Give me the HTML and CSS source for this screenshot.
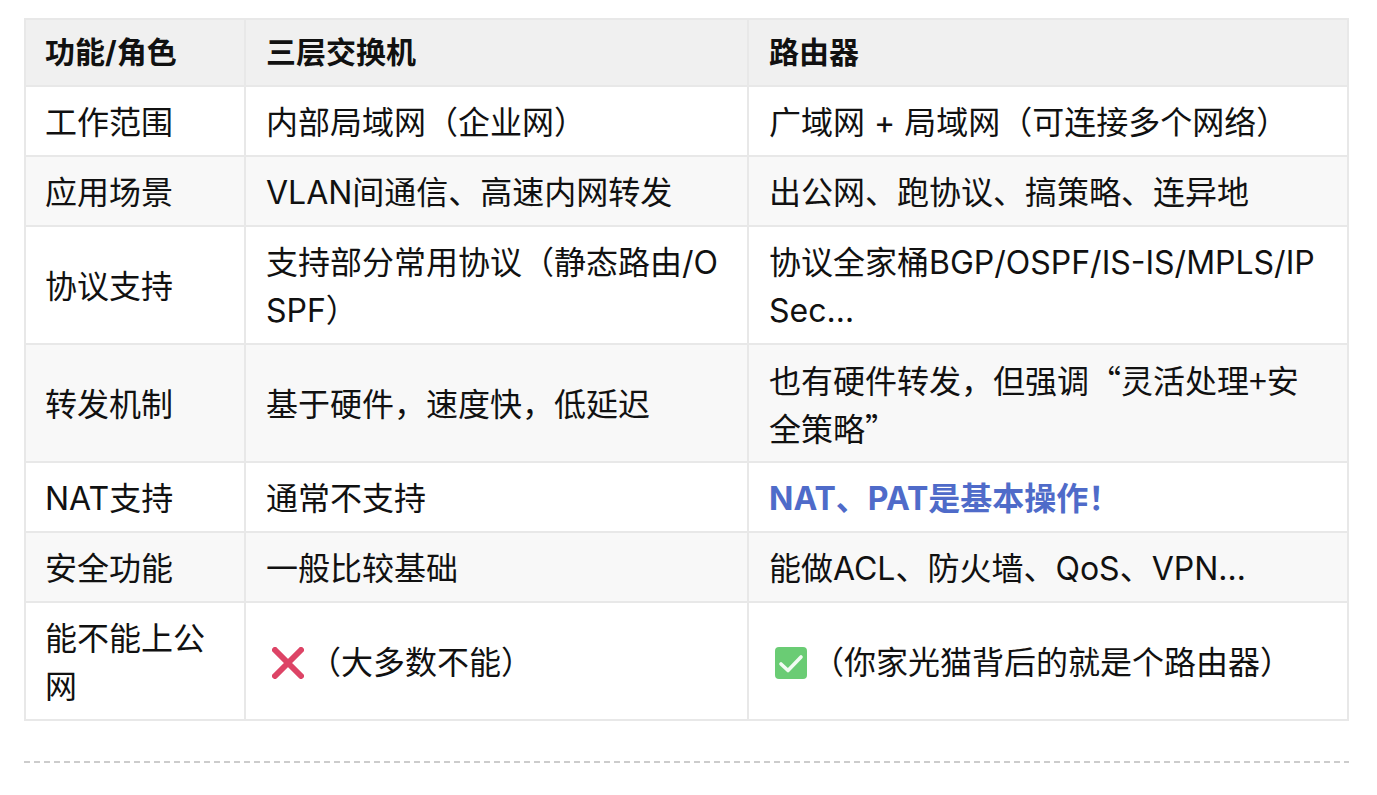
FILE: index.html
```html
<!DOCTYPE html>
<html lang="zh-CN">
<head>
<meta charset="utf-8">
<title>三层交换机与路由器</title>
<link rel="stylesheet" href="styles.css">
</head>
<body>
<table class="compare">
  <colgroup><col class="c1"><col class="c2"><col class="c3"></colgroup>
  <thead>
    <tr><th>功能/角色</th><th>三层交换机</th><th>路由器</th></tr>
  </thead>
  <tbody>
    <tr><td>工作范围</td><td>内部局域网（企业网）</td><td>广域网 + 局域网（可连接多个网络）</td></tr>
    <tr><td>应用场景</td><td>VLAN间通信、高速内网转发</td><td>出公网、跑协议、搞策略、连异地</td></tr>
    <tr><td>协议支持</td><td>支持部分常用协议（静态路由/OSPF）</td><td>协议全家桶BGP/OSPF/IS-IS/MPLS/IPSec…</td></tr>
    <tr><td>转发机制</td><td>基于硬件，速度快，低延迟</td><td class="cjk">也有硬件转发，但强调“灵活处理+安全策略”</td></tr>
    <tr><td>NAT支持</td><td>通常不支持</td><td><strong class="hl">NAT、PAT是基本操作！</strong></td></tr>
    <tr><td>安全功能</td><td>一般比较基础</td><td>能做ACL、防火墙、QoS、VPN…</td></tr>
    <tr>
      <td>能不能上公网</td>
      <td><svg class="emoji" viewBox="0 0 32 32" aria-hidden="true"><path class="cross" d="M3 3 L29 29 M29 3 L3 29"/></svg>（大多数不能）</td>
      <td><svg class="emoji" viewBox="0 0 32 32" aria-hidden="true"><rect class="box" width="32" height="32" rx="4"/><path class="tick" d="M6 17 L13 23.5 L26 10"/></svg>（你家光猫背后的就是个路由器）</td>
    </tr>
  </tbody>
</table>
<hr class="rule">
</body>
</html>
```
FILE: styles.css
```css
html, body {
  margin: 0;
  background: #fff;
}
body {
  padding: 18px 28px 0 24px;
  font-family: "Inter", "Noto Sans CJK SC", sans-serif;
  font-size: 32px;
  line-height: 1.5;
  color: #111;
}
.compare {
  width: 1325px;
  table-layout: fixed;
  border-collapse: collapse;
}
.c1 { width: 220px; }
.c2 { width: 503px; }
.c3 { width: 600px; }
th, td {
  border: 2px solid #e8e8e8;
  text-align: left;
  word-break: break-all;
  overflow-wrap: anywhere;
}
td {
  padding: 12px 20px 8px;
}
th {
  padding: 10px 20px;
  background: #f0f0f0;
  font-size: 30px;
  font-weight: 700;
}
th:first-child,
td:first-child {
  padding-left: 19px;
}
tbody tr:nth-child(even) td {
  background: #f8f8f8;
}
td.cjk {
  padding-top: 10px;
  padding-bottom: 10px;
  font-family: "Noto Sans CJK SC", sans-serif;
}
.hl {
  color: #4f6bc9;
  font-weight: 700;
}
.emoji {
  display: inline-block;
  width: 32px;
  height: 32px;
  margin: 0 5px 0 6px;
  vertical-align: -5px;
}
.cross {
  fill: none;
  stroke: #dd4466;
  stroke-width: 6;
  stroke-linecap: round;
}
.box { fill: #6acc74; }
.tick {
  fill: none;
  stroke: #f2fbf3;
  stroke-width: 3.6;
  stroke-linecap: round;
  stroke-linejoin: round;
}
.rule {
  width: 1325px;
  height: 2px;
  margin: 40px 0 0;
  border: 0;
  background: repeating-linear-gradient(90deg, #cccccc 0 6px, transparent 6px 10px);
}
```
